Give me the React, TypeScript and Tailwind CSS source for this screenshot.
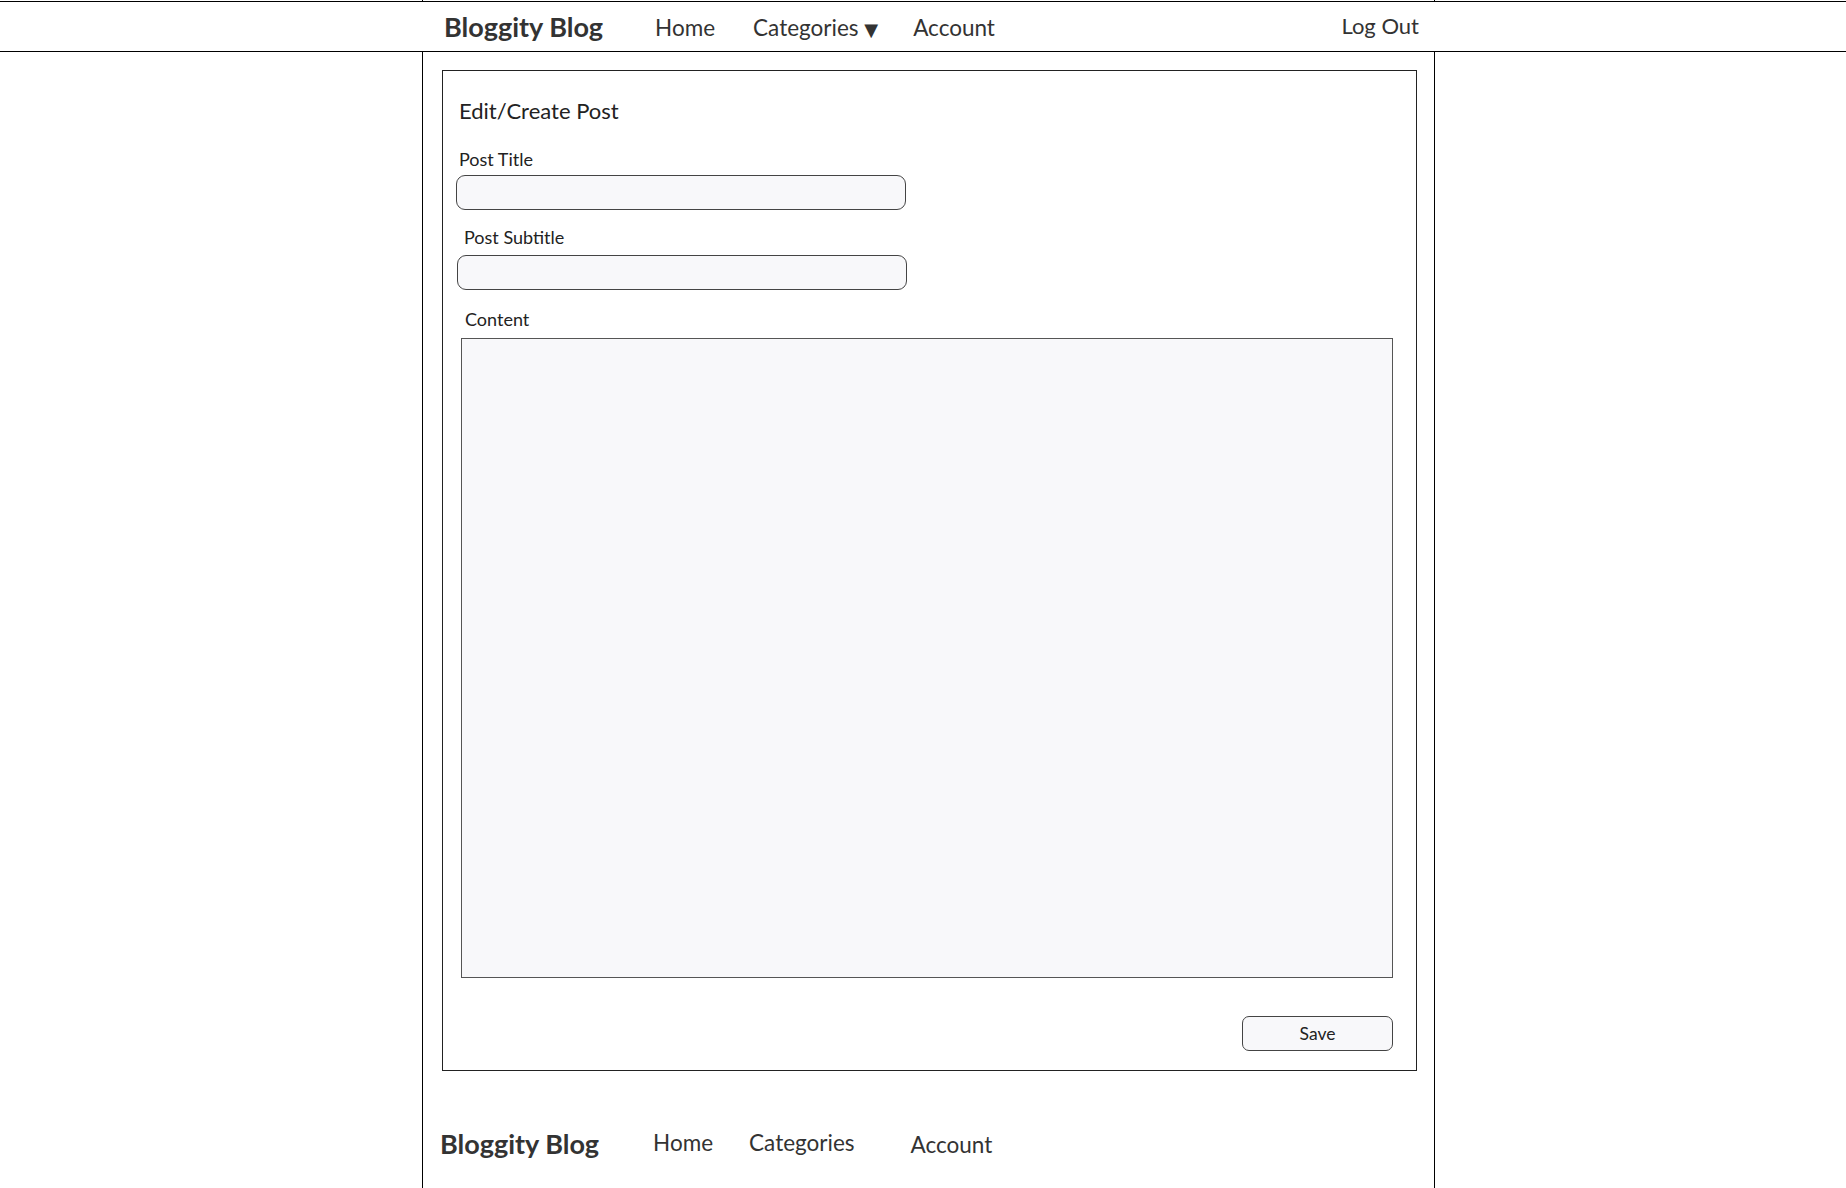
import React from 'react';

const font = "font-['Lato','Liberation_Sans',sans-serif]";

const TopNav = () => {
  return (
    <>
      <div className="ml-[422px] w-[1013px] h-px border-x border-black" />
      <header className="h-[51px] border-y border-black">
        <div className="ml-[422px] w-[1013px] h-full flex items-center text-[#333]">
          <span className="ml-[22px] text-[27px] font-bold leading-none">Bloggity Blog</span>
          <span className="ml-[52px] mt-[4px] text-[22.5px] leading-none">Home</span>
          <span className="ml-[38px] mt-[4px] text-[22.5px] leading-none">
            Categories <span className="font-['DejaVu_Sans'] text-[18px]">▼</span>
          </span>
          <span className="ml-[35px] mt-[4px] text-[22.5px] leading-none">Account</span>
          <span className="ml-auto mr-[16px] -mt-[1px] text-[22px] leading-none">Log Out</span>
        </div>
      </header>
    </>
  );
};

const PostForm = () => {
  return (
    <div className="ml-[19px] mt-[18px] w-[975px] h-[1001px] border border-[#222] text-[#222]">
      <div className="mt-[28px] pl-[16px] h-[24px] leading-[24px] text-[22px]">Edit/Create Post</div>

      <div className="mt-[26px] pl-[16px] h-[20px] leading-[20px] text-[18px]">Post Title</div>
      <div className="mt-[6px] ml-[13px] w-[450px] h-[35px] rounded-[9px] border border-[#444] bg-[#f8f8fa]" />

      <div className="mt-[17px] pl-[21px] h-[20px] leading-[20px] text-[18px]">Post Subtitle</div>
      <div className="mt-[8px] ml-[14px] w-[450px] h-[35px] rounded-[9px] border border-[#444] bg-[#f8f8fa]" />

      <div className="mt-[19px] pl-[22px] h-[20px] leading-[20px] text-[18px]">Content</div>
      <div className="mt-[9px] ml-[18px] w-[932px] h-[640px] border border-[#555] bg-[#f8f8fa]" />

      <div className="mt-[38px] ml-[799px] w-[151px] h-[35px] pt-[2px] rounded-[7px] border border-[#444] bg-[#f8f8fa] flex items-center justify-center text-[17.5px]">
        Save
      </div>
    </div>
  );
};

const Footer = () => {
  return (
    <div className="mt-[52px] h-[40px] flex items-center text-[#333]">
      <span className="ml-[17px] text-[27px] font-bold leading-none">Bloggity Blog</span>
      <span className="ml-[54px] text-[22.5px] leading-none">Home</span>
      <span className="ml-[36px] text-[22.5px] leading-none">Categories</span>
      <span className="ml-[56px] mt-[4px] text-[22.5px] leading-none">Account</span>
    </div>
  );
};

export default function App() {
  return (
    <div className={`min-h-screen bg-white ${font}`}>
      <TopNav />
      <div className="ml-[422px] w-[1013px] min-h-[1136px] flex flex-col border-x border-black">
        <PostForm />
        <Footer />
      </div>
    </div>
  );
}
